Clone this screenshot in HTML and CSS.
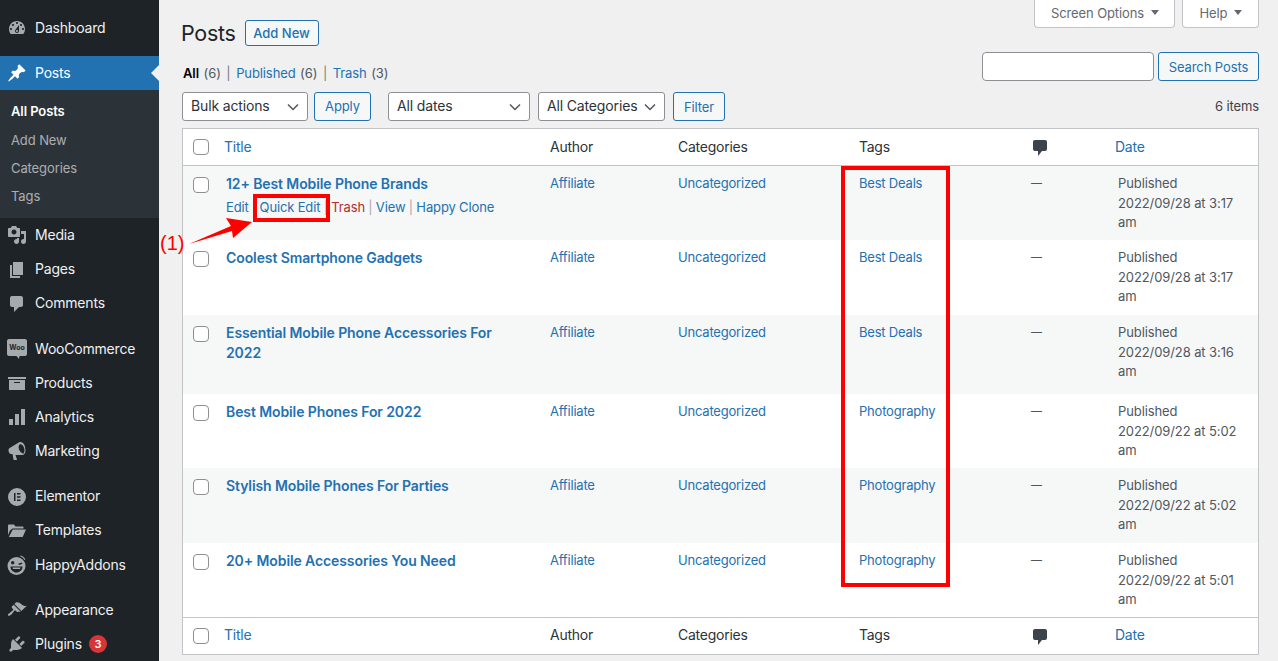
FILE: index.html
```html
<!DOCTYPE html>
<html lang="en">
<head>
	<meta charset="UTF-8">
	<title>Posts</title>
	<link rel="stylesheet" href="styles.css">
</head>
<body>
<div class="layout">
	<aside class="sidebar">
		<a class="menuItem"><svg class="menuIcon" viewBox="0 0 20 20"><path d="M3.76 16h12.48c1.1-1.37 1.76-3.11 1.76-5 0-4.42-3.58-8-8-8s-8 3.58-8 8c0 1.89.66 3.63 1.76 5zM10 4c.55 0 1 .45 1 1s-.45 1-1 1-1-.45-1-1 .45-1 1-1zM6 6c.55 0 1 .45 1 1s-.45 1-1 1-1-.45-1-1 .45-1 1-1zm8 0c.55 0 1 .45 1 1s-.45 1-1 1-1-.45-1-1 .45-1 1-1zm-5.37 5.55L12 7v6c0 1.1-.9 2-2 2s-2-.9-2-2c0-.57.24-1.08.63-1.45zM4 10c.55 0 1 .45 1 1s-.45 1-1 1-1-.45-1-1 .45-1 1-1zm12 0c.55 0 1 .45 1 1s-.45 1-1 1-1-.45-1-1 .45-1 1-1zm-5 3c0-.55-.45-1-1-1s-1 .45-1 1 .45 1 1 1 1-.45 1-1z"/></svg>Dashboard</a>
		<div class="menuGroup">
			<a class="menuItem current"><svg class="menuIcon" viewBox="0 0 20 20"><path d="M10.44 3.02l1.82-1.82 6.36 6.35-1.83 1.82c-1.05-.68-2.48-.57-3.41.36l-.75.75c-.92.93-1.04 2.35-.35 3.41l-1.83 1.82-2.41-2.41-2.8 2.79c-.42.42-3.38 2.71-3.8 2.29s1.86-3.39 2.28-3.81l2.79-2.79L4.1 9.36l1.83-1.82c1.05.69 2.48.57 3.41-.36l.75-.75c.93-.92 1.04-2.35.35-3.41z"/></svg>Posts</a>
			<ul class="submenu">
				<li class="active">All Posts</li>
				<li>Add New</li>
				<li>Categories</li>
				<li>Tags</li>
			</ul>
			<a class="menuItem"><svg class="menuIcon" viewBox="0 0 20 20"><path d="M13 11V4c0-.55-.45-1-1-1h-1.67L9 1H5L3.67 3H2c-.55 0-1 .45-1 1v7c0 .55.45 1 1 1h10c.55 0 1-.45 1-1zM7 4.5c1.38 0 2.5 1.12 2.5 2.5S8.38 9.5 7 9.5 4.5 8.38 4.5 7 5.62 4.5 7 4.5zM14 6h5v10.5c0 1.38-1.12 2.5-2.5 2.5S14 17.88 14 16.5s1.12-2.5 2.5-2.5c.17 0 .34.02.5.05V9h-3V6zm-4 8.05V13h2v3.5c0 1.38-1.12 2.5-2.5 2.5S7 17.88 7 16.5 8.12 14 9.5 14c.17 0 .34.02.5.05z"/></svg>Media</a>
			<a class="menuItem"><svg class="menuIcon" viewBox="0 0 20 20"><path d="M6 15V2h10v13H6zm-1 1h8v2H3V5h2v11z"/></svg>Pages</a>
			<a class="menuItem"><svg class="menuIcon" viewBox="0 0 20 20"><path d="M5 2h9c1.1 0 2 .9 2 2v7c0 1.1-.9 2-2 2h-2l-5 5v-5H5c-1.1 0-2-.9-2-2V4c0-1.1.9-2 2-2z"/></svg>Comments</a>
		</div>
		<div class="menuGroup">
			<a class="menuItem"><svg class="menuIcon" viewBox="0 0 20 20"><path d="M2 0h16c1 0 2 .8 2 2v13c0 1.1-1 2-2 2h-5.5l-.5 3-2.5-3H2c-1 0-2-.9-2-2V2C0 .8 1 0 2 0z"/><text class="wooMark" x="10" y="11" text-anchor="middle">Woo</text></svg>WooCommerce</a>
			<a class="menuItem"><svg class="menuIcon" viewBox="0 0 20 20"><path d="M19 4v2H1V4h18zM2 7h16v10H2V7zm11 3V9H7v1h6z"/></svg>Products</a>
			<a class="menuItem"><svg class="menuIcon" viewBox="0 0 20 20"><path d="M18 18V2h-4v16h4zm-6 0V7H8v11h4zm-6 0v-6H2v6h4z"/></svg>Analytics</a>
			<a class="menuItem"><svg class="menuIcon" viewBox="0 0 20 20"><path d="M18.15 5.94c.46 1.62.38 3.22-.02 4.48-.42 1.28-1.26 2.18-2.3 2.48-.16.06-.26.06-.4.06-.06.02-.12.02-.18.02-.06.02-.14.02-.22.02H8.5l1.5 4.5c.02.14-.06.26-.14.34-.08.1-.24.16-.34.16H6.95c-.1 0-.26-.06-.34-.16-.08-.08-.16-.2-.14-.34l-1-5.5H4.25c-.5.06-1.08-.18-1.54-.62s-.88-1.08-1.06-1.88c-.24-.8-.2-1.56-.02-2.2.18-.62.58-1.08 1.06-1.3l9.02-5.42c.1-.06.18-.1.24-.16.06-.04.14-.08.24-.12.16-.08.28-.12.5-.18 1.04-.3 2.24.1 3.22 1 .98.88 1.8 2.24 2.26 3.86zm-2.58 5.98c.4-.1.74-.34 1.04-.7.58-.7.86-1.76.86-3.04-.02-.64-.1-1.3-.3-1.98-.2-.66-.46-1.28-.78-1.82-.68-1.08-1.58-1.9-2.48-2.1-.24-.06-.5-.06-.74.02-.96.28-1.48 1.28-1.54 2.7 0 .64.08 1.3.28 1.98.2.68.46 1.28.8 1.82.34.54.72 1 1.14 1.34.42.36.8.56 1.2.66.2.06.4.06.52.12z"/></svg>Marketing</a>
		</div>
		<div class="menuGroup">
			<a class="menuItem"><svg class="menuIcon" viewBox="0 0 20 20"><path fill-rule="evenodd" d="M10 1a9 9 0 1 0 0 18 9 9 0 0 0 0-18zM7 6h1.500v8H7V6zm3 0h3.500v1.500H10V6zm0 3.250h3.500v1.500H10v-1.500zM10 12.500h3.500V14H10v-1.500z"/></svg>Elementor</a>
			<a class="menuItem"><svg class="menuIcon" viewBox="0 0 20 20"><path d="M1 4.500C1 4 1.400 3.500 2 3.500h5l1.500 2h7c.5 0 1 .4 1 1v1H5.500L3 9.500 1 14V4.500zM5.800 8.500H19l-3.300 7.500H1.800l4-7.500z"/></svg>Templates</a>
			<a class="menuItem"><svg class="menuIcon" viewBox="0 0 20 20"><circle cx="9.500" cy="11" r="9"/><path class="faceDark" d="M4 7.800a1.700 1.700 0 1 1 3.400 0 1.700 1.700 0 0 1-3.400 0zM11 8.800l4-1.300.4 1.200-3 1.300zM3.500 11.500h12c0 3.500-2.700 6-6 6s-6-2.500-6-6z"/><path d="M5.500 12.500h8l-.5 1.500H6zM13.500.5c2.200.4 4 2 4.800 4l-1 .4c-.7-1.700-2.200-3-4-3.400z"/></svg>HappyAddons</a>
		</div>
		<div class="menuGroup">
			<a class="menuItem"><svg class="menuIcon" viewBox="0 0 20 20"><path d="M14.48 11.06L7.41 3.99l1.5-1.5c.5-.56 2.3-.47 3.51.32 1.21.8 1.43 1.28 2.91 2.1 1.18.64 2.45 1.26 4.45.85zm-.71.71L6.7 4.7 4.93 6.47c-.39.39-.39 1.02 0 1.41l1.06 1.06c.39.39.39 1.03 0 1.42-.6.6-1.43 1.11-2.21 1.69-.35.26-.7.53-1.01.84C1.43 13.23.4 14.84 1.15 15.6c.75.75 2.37-.28 3.7-1.62.31-.31.58-.66.84-1.01.58-.78 1.09-1.61 1.69-2.21.39-.39 1.02-.39 1.41 0l1.06 1.06c.39.39 1.02.39 1.41 0z"/></svg>Appearance</a>
			<a class="menuItem"><svg class="menuIcon" viewBox="0 0 20 20"><path d="M13.11 4.36L9.87 7.6 8 5.73l3.24-3.24c.35-.34 1.05-.2 1.56.32.52.51.66 1.21.31 1.55zm-8 1.77l.91-1.12 9.01 9.01-1.19.84c-.71.71-2.63 1.16-3.82 1.16H6.14L4.9 17.26c-.59.59-1.54.59-2.12 0-.59-.58-.59-1.53 0-2.12l1.24-1.24v-3.88c0-1.13.4-3.19 1.09-3.89zm7.26 3.97l3.24-3.24c.34-.35 1.04-.21 1.55.31.52.51.66 1.21.31 1.55l-3.24 3.25z"/></svg>Plugins<span class="badge">3</span></a>
		</div>
	</aside>

	<main class="content">
		<div class="topBar">
			<div class="topLeft">
				<div class="heading">
					<h1>Posts</h1>
					<a class="btn addNew">Add New</a>
				</div>
				<p class="subsub"><b>All</b> (6) <i>|</i> <a>Published</a> (6) <i>|</i> <a>Trash</a> (3)</p>
			</div>
			<div class="topRight">
				<div class="screenTabs">
					<span class="tab optionsTab">Screen Options<em class="caret"></em></span>
					<span class="tab helpTab">Help<em class="caret"></em></span>
				</div>
				<div class="searchBox">
					<input class="searchInput" type="text">
					<a class="btn searchBtn">Search Posts</a>
				</div>
			</div>
		</div>

		<div class="tablenav">
			<select class="sel selBulk"><option>Bulk actions</option></select>
			<a class="btn applyBtn">Apply</a>
			<select class="sel selDates"><option>All dates</option></select>
			<select class="sel selCats"><option>All Categories</option></select>
			<a class="btn filterBtn">Filter</a>
			<span class="count">6 items</span>
		</div>

		<table class="posts">
			<colgroup>
				<col class="colCb"><col class="colTitle"><col class="colAuthor"><col class="colCats"><col class="colTags"><col class="colCmt"><col class="colDate">
			</colgroup>
			<thead>
				<tr>
					<th><input class="cb" type="checkbox"></th>
					<th class="link">Title</th>
					<th>Author</th>
					<th>Categories</th>
					<th>Tags</th>
					<th class="thCmt"><svg class="cmtIcon" viewBox="0 0 20 20"><path d="M5 2h10c1.100 0 2 .9 2 2v7c0 1.100-.9 2-2 2h-3l-4 5v-5H5c-1.100 0-2-.9-2-2V4c0-1.100.9-2 2-2z"/></svg></th>
					<th class="link thDate">Date</th>
				</tr>
			</thead>
			<tbody>
				<tr>
					<td><input class="cb" type="checkbox"></td>
					<td class="tdTitle"><a class="postTitle">12+ Best Mobile Phone Brands</a>
						<div class="rowActions"><a>Edit</a> <i>|</i> <a>Quick Edit</a> <i>|</i> <a class="trash">Trash</a> <i>|</i> <a>View</a> <i>|</i> <a>Happy Clone</a></div></td>
					<td><a>Affiliate</a></td>
					<td><a>Uncategorized</a></td>
					<td><a>Best Deals</a></td>
					<td class="tdDash">—</td>
					<td class="tdDate">Published<br>2022/09/28 at 3:17 am</td>
				</tr>
				<tr>
					<td><input class="cb" type="checkbox"></td>
					<td class="tdTitle"><a class="postTitle">Coolest Smartphone Gadgets</a></td>
					<td><a>Affiliate</a></td>
					<td><a>Uncategorized</a></td>
					<td><a>Best Deals</a></td>
					<td class="tdDash">—</td>
					<td class="tdDate">Published<br>2022/09/28 at 3:17 am</td>
				</tr>
				<tr class="tallRow">
					<td><input class="cb" type="checkbox"></td>
					<td class="tdTitle"><a class="postTitle">Essential Mobile Phone Accessories For 2022</a></td>
					<td><a>Affiliate</a></td>
					<td><a>Uncategorized</a></td>
					<td><a>Best Deals</a></td>
					<td class="tdDash">—</td>
					<td class="tdDate">Published<br>2022/09/28 at 3:16 am</td>
				</tr>
				<tr>
					<td><input class="cb" type="checkbox"></td>
					<td class="tdTitle"><a class="postTitle">Best Mobile Phones For 2022</a></td>
					<td><a>Affiliate</a></td>
					<td><a>Uncategorized</a></td>
					<td><a>Photography</a></td>
					<td class="tdDash">—</td>
					<td class="tdDate">Published<br>2022/09/22 at 5:02 am</td>
				</tr>
				<tr>
					<td><input class="cb" type="checkbox"></td>
					<td class="tdTitle"><a class="postTitle">Stylish Mobile Phones For Parties</a></td>
					<td><a>Affiliate</a></td>
					<td><a>Uncategorized</a></td>
					<td><a>Photography</a></td>
					<td class="tdDash">—</td>
					<td class="tdDate">Published<br>2022/09/22 at 5:02 am</td>
				</tr>
				<tr>
					<td><input class="cb" type="checkbox"></td>
					<td class="tdTitle"><a class="postTitle">20+ Mobile Accessories You Need</a></td>
					<td><a>Affiliate</a></td>
					<td><a>Uncategorized</a></td>
					<td><a>Photography</a></td>
					<td class="tdDash">—</td>
					<td class="tdDate">Published<br>2022/09/22 at 5:01 am</td>
				</tr>
			</tbody>
			<tfoot>
				<tr>
					<th><input class="cb" type="checkbox"></th>
					<th class="link">Title</th>
					<th>Author</th>
					<th>Categories</th>
					<th>Tags</th>
					<th class="thCmt"><svg class="cmtIcon" viewBox="0 0 20 20"><path d="M5 2h10c1.100 0 2 .9 2 2v7c0 1.100-.9 2-2 2h-3l-4 5v-5H5c-1.100 0-2-.9-2-2V4c0-1.100.9-2 2-2z"/></svg></th>
					<th class="link thDate">Date</th>
				</tr>
			</tfoot>
		</table>
	</main>

	<!-- annotations drawn over the screenshot -->
	<div class="markBox markQuick"></div>
	<div class="markBox markTags"></div>
	<span class="markLabel">(1)</span>
	<svg class="markArrow" viewBox="0 0 1278 661"><polygon points="189,244 231,226 226,218 252,222 233,238 232,231"/></svg>
</div>
</body>
</html>
```

FILE: styles.css
```css
* {
	margin: 0;
	padding: 0;
	box-sizing: border-box;
}

html, body {
	height: 100%;
	overflow: hidden;
}

body {
	background-color: #f0f0f1;
	font-family: Inter, "Noto Sans", sans-serif;
	font-size: 13px;
	letter-spacing: -.1px;
	color: #50575e;
}

a {
	color: #2271b1;
}

i {
	font-style: normal;
}

.layout {
	position: relative;
	display: flex;
	width: 1278px;
	height: 661px;
	overflow: hidden;
}

/* sidebar */
.sidebar {
	flex: none;
	width: 159px;
	height: 661px;
	padding-top: 11px;
	background-color: #1d2327;
}
.menuGroup {
	margin-top: 11px;
}
.menuItem {
	position: relative;
	display: flex;
	align-items: center;
	height: 34.2px;
	padding: 0 0 2px 35px;
	font-size: 14px;
	letter-spacing: -.2px;
	color: #f0f0f1;
}
.menuIcon {
	position: absolute;
	left: 7px;
	top: 7px;
	width: 20px;
	height: 20px;
	fill: #a7aaad;
}
.faceDark {
	fill: #1d2327;
}
.wooMark {
	font-size: 7px;
	font-weight: 700;
	letter-spacing: 0;
	fill: #1d2327;
}
.menuItem.current {
	background-color: #2271b1;
	color: #fff;
}
.menuItem.current .menuIcon {
	fill: #fff;
}
.menuItem.current::after {
	content: "";
	position: absolute;
	right: 0;
	top: 9px;
	border: 8px solid transparent;
	border-right-color: #f0f0f1;
}
.submenu {
	height: 128px;
	padding-top: 7px;
	background-color: #2c3338;
	list-style: none;
}
.submenu li {
	height: 28.3px;
	padding-left: 11px;
	line-height: 29px;
	color: #c3c4c7;
	opacity: .85;
}
.submenu .active {
	color: #fff;
	font-weight: 600;
	opacity: 1;
}
.badge {
	display: inline-block;
	width: 18px;
	height: 18px;
	margin-left: 7px;
	border-radius: 50%;
	background-color: #d63638;
	color: #fff;
	font-size: 11px;
	font-weight: 600;
	line-height: 18px;
	text-align: center;
}

/* main column */
.content {
	flex: none;
	width: 1077px;
	margin-left: 23px;
}
.topBar {
	display: flex;
	justify-content: space-between;
	height: 92px;
}
.heading {
	display: flex;
	align-items: center;
	gap: 9px;
	margin-top: 20px;
	height: 26px;
}
h1 {
	margin-left: -1px;
	font-size: 21.5px;
	font-weight: 400;
	letter-spacing: -.3px;
	color: #1d2327;
}
.subsub {
	margin-top: 18px;
	padding-left: 1px;
	line-height: 18px;
	word-spacing: 1px;
}
.subsub b {
	font-weight: 600;
	color: #000;
}
.subsub i {
	margin: 0 1px;
	color: #787c82;
}

.btn {
	display: inline-flex;
	align-items: center;
	justify-content: center;
	border: 1px solid #2271b1;
	border-radius: 3px;
	background-color: #f6f7f7;
	color: #2271b1;
}
.addNew {
	width: 74px;
	height: 26px;
	font-weight: 500;
	letter-spacing: 0;
}

.topRight {
	display: flex;
	flex-direction: column;
	align-items: flex-end;
}
.screenTabs {
	display: flex;
	gap: 7px;
	height: 28px;
}
.tab {
	display: flex;
	align-items: center;
	justify-content: center;
	gap: 7px;
	height: 28px;
	padding: 0 0 2px 1px;
	border: 1px solid #c3c4c7;
	border-top: 0;
	border-radius: 0 0 4px 4px;
	background-color: #fff;
	color: #646970;
}
.optionsTab {
	width: 141px;
}
.helpTab {
	width: 77px;
}
.caret {
	width: 0;
	height: 0;
	border-left: 4px solid transparent;
	border-right: 4px solid transparent;
	border-top: 5px solid #646970;
}
.searchBox {
	display: flex;
	gap: 4px;
	margin-top: 24px;
}
.searchInput {
	width: 172px;
	height: 29px;
	border: 1px solid #8c8f94;
	border-radius: 4px;
	background-color: #fff;
}
.searchBtn {
	width: 101px;
	height: 29px;
}

.tablenav {
	display: flex;
	align-items: center;
	height: 29px;
}
.sel {
	height: 29px;
	padding: 0 24px 2px 8px;
	border: 1px solid #8c8f94;
	border-radius: 3px;
	appearance: none;
	background: #fff url("data:image/svg+xml;charset=utf-8,%3Csvg xmlns='http://www.w3.org/2000/svg' width='12' height='8'%3E%3Cpath d='M1 1.500l5 5 5-5' fill='none' stroke='%2350575e' stroke-width='1.500'/%3E%3C/svg%3E") no-repeat right 8px top 50%;
	font-family: inherit;
	font-size: 14px;
	letter-spacing: -.15px;
	color: #2c3338;
}
.selBulk {
	width: 126px;
}
.applyBtn {
	width: 57px;
	height: 29px;
	margin-left: 6px;
	padding-bottom: 2px;
}
.selDates {
	width: 142px;
	margin-left: 17px;
}
.selCats {
	width: 127px;
	margin-left: 8px;
}
.filterBtn {
	width: 52px;
	height: 29px;
	margin-left: 8px;
}
.count {
	margin-left: auto;
	padding-bottom: 2px;
	color: #3c434a;
}

/* table */
.posts {
	width: 1077px;
	margin-top: 7px;
	border: 1px solid #c3c4c7;
	border-collapse: separate;
	border-spacing: 0;
	table-layout: fixed;
	background-color: #fff;
}
.colCb { width: 31px; }
.colTitle { width: 326px; }
.colAuthor { width: 128px; }
.colCats { width: 181px; }
.colTags { width: 173px; }
.colCmt { width: 84px; }
.colDate { width: 152px; }

.posts th {
	height: 37px;
	padding: 0 10px 2px;
	font-size: 14px;
	font-weight: 400;
	letter-spacing: -.25px;
	text-align: left;
	color: #2c3338;
}
.posts thead th {
	border-bottom: 1px solid #c3c4c7;
}
.posts tfoot th {
	height: 36.5px;
	border-top: 1px solid #c3c4c7;
}
.posts th.link {
	color: #2271b1;
}
.posts th.thCmt {
	padding-left: 8px;
}
.posts th.thDate {
	padding-left: 9px;
}
.posts td {
	height: 74px;
	padding: 8px 10px 7px;
	line-height: 19.5px;
	letter-spacing: -.2px;
	vertical-align: top;
}
.posts tbody tr:nth-child(3n+2) td {
	height: 75px;
}
.posts .tallRow td {
	height: 79px;
}
.posts tbody tr:nth-child(odd) {
	background-color: #f6f7f7;
}
.posts th:first-child,
.posts td:first-child {
	padding: 0 0 0 10px;
}
.posts td:first-child {
	padding-top: 11px;
}
.cb {
	display: block;
	width: 16px;
	height: 16px;
	border: 1px solid #8c8f94;
	border-radius: 4px;
	appearance: none;
	background-color: #fff;
}
.cmtIcon {
	display: block;
	width: 20px;
	height: 20px;
	margin-top: 4px;
	fill: #3c434a;
}
.posts .tdTitle {
	padding-left: 12px;
	line-height: 19px;
}
.postTitle {
	font-size: 14px;
	font-weight: 600;
	letter-spacing: -.1px;
}
.rowActions {
	margin-top: 4px;
	white-space: nowrap;
	line-height: 19px;
	letter-spacing: -.1px;
	word-spacing: -.3px;
}
.rowActions i {
	color: #a7aaad;
}
.trash {
	color: #b32d2e;
}
.posts .tdDash {
	padding-left: 9px;
	font-size: 11px;
}
.posts .tdDate {
	padding-left: 12px;
	letter-spacing: -.1px;
}

/* red annotations */
.markBox {
	position: absolute;
	border: 4px solid #f00;
}
.markQuick {
	left: 253px;
	top: 194px;
	width: 77px;
	height: 28px;
}
.markTags {
	left: 841px;
	top: 166px;
	width: 109px;
	height: 421px;
}
.markLabel {
	position: absolute;
	left: 160px;
	top: 232px;
	font-family: "Liberation Sans", sans-serif;
	font-size: 20px;
	letter-spacing: 0;
	color: #f00;
}
.markArrow {
	position: absolute;
	left: 0;
	top: 0;
	width: 1278px;
	height: 661px;
	fill: #f00;
	pointer-events: none;
}
```
